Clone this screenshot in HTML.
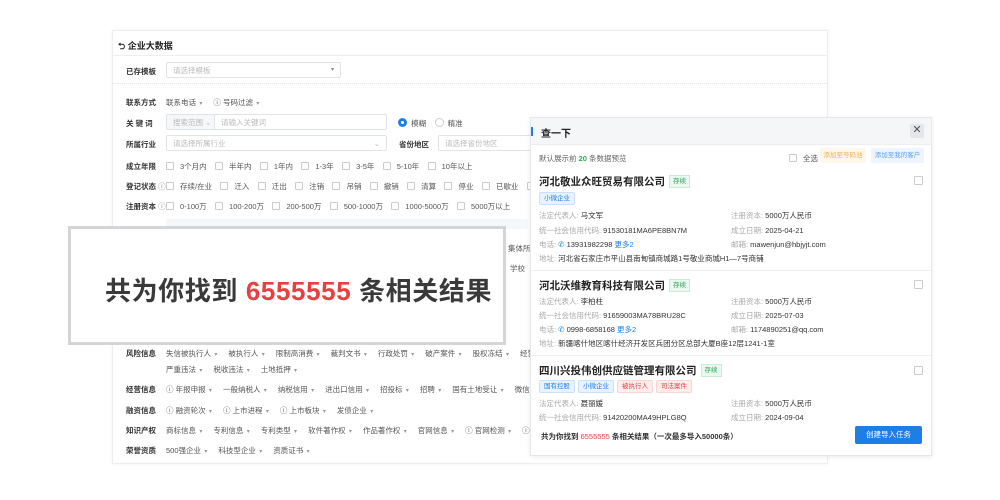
<!DOCTYPE html>
<html><head><meta charset="utf-8">
<style>
*{margin:0;padding:0;box-sizing:border-box}
body{width:1000px;height:500px;background:#fff;font-family:"Liberation Sans","Noto Sans CJK SC",sans-serif;color:#333;position:relative;overflow:hidden;font-size:7.5px}
.a{position:absolute;white-space:nowrap}
.panel{position:absolute;left:112px;top:30px;width:716px;height:434px;background:#fff;border:1px solid #eceef2;box-shadow:0 0 4px rgba(0,0,0,.05)}
.lbl{font-weight:bold;color:#333}
.inp{position:absolute;border:1px solid #e0e3e8;border-radius:2px;background:#fff;color:#bbb;padding-left:6px;line-height:15px;height:16px}
.cb{display:inline-block;width:8px;height:8px;border:1px solid #ccc;border-radius:1px;vertical-align:-1px;margin-right:6px;background:#fff}
.g{color:#555}
.dd{margin-right:11px}
.dd:after{content:"\00a0\00a0▾";color:#999;font-size:6px}
.ov{position:absolute;left:68px;top:226px;width:438px;height:119px;background:#fff;border:3px solid #d4d5d7}
.dlg{position:absolute;left:530px;top:117px;width:402px;height:339px;background:#fff;border:1px solid #e6e8eb;box-shadow:0 1px 5px rgba(0,0,0,.08)}
.tag{display:inline-block;font-size:6.5px;padding:0 4px;line-height:11px;border-radius:2px;margin-right:3px}
.tb{background:#e8f3ff;color:#1e7ee8;border:1px solid #c8e1fc}
.tr{background:#fdeeee;color:#e84040;border:1px solid #f9d4d4}
.tg{background:#eaf8ef;color:#28a55a;border:1px solid #c8ecd5;font-size:6.5px;padding:0 3px;line-height:11px;display:inline-block;vertical-align:2px;margin-left:4px;font-weight:normal}
.k{color:#aaa}
.co{font-size:10.5px;font-weight:bold;color:#222}
.rcb{position:absolute;right:8px;width:9px;height:9px;border:1px solid #ccc;border-radius:1px}
</style></head><body>
<div class="panel"></div>
<div class="a" style="left:118px;top:39px;font-size:9px;font-weight:bold;color:#222">⮌ 企业大数据</div>
<div class="a" style="left:113px;top:55px;width:714px;border-top:1px solid #eee"></div>
<div class="a lbl" style="left:126px;top:66px">已存模板</div>
<div class="inp" style="left:166px;top:62px;width:175px">请选择模板<span style="float:right;margin-right:6px;color:#888;font-size:6px">▾</span></div>
<div class="a" style="left:113px;top:83px;width:714px;border-top:1px dotted #e4e4e4"></div>
<div class="a lbl" style="left:126px;top:97px">联系方式</div>
<div class="a g" style="left:166px;top:97px"><span class="dd">联系电话</span>ⓘ <span class="dd">号码过滤</span></div>
<div class="a lbl" style="left:126px;top:118px">关 键 词</div>
<div class="inp" style="left:166px;top:114px;width:50px;background:#f6f7f9">搜索范围 ⌄</div>
<div class="inp" style="left:214px;top:114px;width:173px">请输入关键词</div>
<div class="a g" style="left:398px;top:118px"><span style="display:inline-block;width:9px;height:9px;border-radius:50%;border:3px solid #1e7ee8;vertical-align:-1px"></span>&nbsp; 模糊 &nbsp;&nbsp;&nbsp;<span style="display:inline-block;width:9px;height:9px;border-radius:50%;border:1px solid #ccc;vertical-align:-1px"></span>&nbsp; 精准</div>
<div class="a lbl" style="left:126px;top:139px">所属行业</div>
<div class="inp" style="left:166px;top:135px;width:221px">请选择所属行业<span style="float:right;margin-right:6px">⌄</span></div>
<div class="a lbl" style="left:399px;top:139px">省份地区</div>
<div class="inp" style="left:438px;top:135px;width:100px">请选择省份地区</div>
<div class="a lbl" style="left:126px;top:161px">成立年限</div>
<div class="a g" style="left:166px;top:161px;word-spacing:0"><span class="cb"></span>3个月内 &nbsp;&nbsp; <span class="cb"></span>半年内 &nbsp;&nbsp; <span class="cb"></span>1年内 &nbsp;&nbsp; <span class="cb"></span>1-3年 &nbsp;&nbsp; <span class="cb"></span>3-5年 &nbsp;&nbsp; <span class="cb"></span>5-10年 &nbsp;&nbsp; <span class="cb"></span>10年以上</div>
<div class="a lbl" style="left:126px;top:181px">登记状态 <span style="font-weight:normal;color:#888">ⓘ</span></div>
<div class="a g" style="left:166px;top:181px"><span class="cb"></span>存续/在业 &nbsp;&nbsp; <span class="cb"></span>迁入 &nbsp;&nbsp; <span class="cb"></span>迁出 &nbsp;&nbsp; <span class="cb"></span>注销 &nbsp;&nbsp; <span class="cb"></span>吊销 &nbsp;&nbsp; <span class="cb"></span>撤销 &nbsp;&nbsp; <span class="cb"></span>清算 &nbsp;&nbsp; <span class="cb"></span>停业 &nbsp;&nbsp; <span class="cb"></span>已歇业 &nbsp;&nbsp; <span class="cb"></span>责令</div>
<div class="a lbl" style="left:126px;top:201px">注册资本 <span style="font-weight:normal;color:#888">ⓘ</span></div>
<div class="a g" style="left:166px;top:201px"><span class="cb"></span>0-100万 &nbsp;&nbsp; <span class="cb"></span>100-200万 &nbsp;&nbsp; <span class="cb"></span>200-500万 &nbsp;&nbsp; <span class="cb"></span>500-1000万 &nbsp;&nbsp; <span class="cb"></span>1000-5000万 &nbsp;&nbsp; <span class="cb"></span>5000万以上</div>
<div class="a" style="left:166px;top:219px;width:362px;height:10px;background:#f6f7f9"></div>
<div class="a g" style="left:508px;top:243px">集体所有</div>
<div class="a g" style="left:510px;top:263px">学校</div>

<div class="a lbl" style="left:126px;top:348px">风险信息</div>
<div class="a g" style="left:166px;top:348px"><span class="dd">失信被执行人</span><span class="dd">被执行人</span><span class="dd">限制高消费</span><span class="dd">裁判文书</span><span class="dd">行政处罚</span><span class="dd">破产案件</span><span class="dd">股权冻结</span><span class="dd">经营异常</span></div>
<div class="a g" style="left:166px;top:364px"><span class="dd">严重违法</span><span class="dd">税收违法</span><span class="dd">土地抵押</span></div>
<div class="a lbl" style="left:126px;top:384px">经营信息</div>
<div class="a g" style="left:166px;top:384px"><span class="dd">ⓘ&nbsp;年报申报</span><span class="dd">一般纳税人</span><span class="dd">纳税信用</span><span class="dd">进出口信用</span><span class="dd">招投标</span><span class="dd">招聘</span><span class="dd">国有土地受让</span>微信公众号</div>
<div class="a lbl" style="left:126px;top:405px">融资信息</div>
<div class="a g" style="left:166px;top:405px"><span class="dd">ⓘ&nbsp;融资轮次</span><span class="dd">ⓘ&nbsp;上市进程</span><span class="dd">ⓘ&nbsp;上市板块</span><span class="dd">发债企业</span></div>
<div class="a lbl" style="left:126px;top:425px">知识产权</div>
<div class="a g" style="left:166px;top:425px"><span class="dd">商标信息</span><span class="dd">专利信息</span><span class="dd">专利类型</span><span class="dd">软件著作权</span><span class="dd">作品著作权</span><span class="dd">官网信息</span><span class="dd">ⓘ&nbsp;官网检测</span>ⓘ&nbsp;备案网</div>
<div class="a lbl" style="left:126px;top:445px">荣誉资质</div>
<div class="a g" style="left:166px;top:445px"><span class="dd">500强企业</span><span class="dd">科技型企业</span><span class="dd">资质证书</span></div>

<div class="ov"><div class="a" style="left:34px;top:42px;font-size:26px;font-weight:bold;color:#3a3a3a;letter-spacing:0.6px">共为你找到 <span style="color:#e64040">6555555</span> 条相关结果</div></div>

<div class="dlg">
<div class="a" style="left:0;top:0;width:400px;height:27px;background:#f5f6f8;border-bottom:1px solid #eee"></div>
<div class="a" style="left:0;top:9px;width:2px;height:9px;background:#1e7ee8"></div>
<div class="a" style="left:10px;top:7px;font-size:10px;font-weight:bold;color:#222">查一下</div>
<div class="a" style="left:379px;top:6px;width:14px;height:14px;background:#e4e6ea;border-radius:2px;text-align:center;line-height:13px;font-size:11px;color:#555">✕</div>
<div class="a" style="left:8px;top:35px;color:#666">默认展示前 <b style="color:#28b04a">20</b> 条数据预览</div>
<div class="a g" style="left:258px;top:35px"><span class="cb"></span>全选</div>
<div class="a" style="left:289px;top:30px;width:46px;height:15px;background:#fdf7ec;color:#f0b050;font-size:6.5px;line-height:15px;text-align:center">添加至号码池</div>
<div class="a" style="left:340px;top:30px;width:53px;height:15px;background:#eef5fe;color:#5a9ef0;font-size:6.5px;line-height:15px;text-align:center">添加至我的客户</div>

<div class="a co" style="left:8px;top:56px">河北敬业众旺贸易有限公司<span class="tg">存续</span></div>
<div class="rcb" style="top:58px"></div>
<div class="a" style="left:8px;top:74px"><span class="tag tb">小微企业</span></div>
<div class="a" style="left:8px;top:92px"><span class="k">法定代表人:</span> 马文军</div>
<div class="a" style="left:200px;top:92px"><span class="k">注册资本:</span> 5000万人民币</div>
<div class="a" style="left:8px;top:107px"><span class="k">统一社会信用代码:</span> 91530181MA6PE8BN7M</div>
<div class="a" style="left:200px;top:107px"><span class="k">成立日期:</span> 2025-04-21</div>
<div class="a" style="left:8px;top:121px"><span class="k">电话:</span> <span style="color:#1e7ee8">✆</span> 13931982298 <span style="color:#1e7ee8">更多2</span></div>
<div class="a" style="left:200px;top:121px"><span class="k">邮箱:</span> mawenjun@hbjyjt.com</div>
<div class="a" style="left:8px;top:135px"><span class="k">地址:</span> 河北省石家庄市平山县南甸镇商城路1号敬业商城H1—7号商铺</div>
<div class="a" style="left:0;top:152px;width:400px;border-top:1px solid #f0f0f0"></div>

<div class="a co" style="left:8px;top:160px">河北沃维教育科技有限公司<span class="tg">存续</span></div>
<div class="rcb" style="top:162px"></div>
<div class="a" style="left:8px;top:178px"><span class="k">法定代表人:</span> 李柏柱</div>
<div class="a" style="left:200px;top:178px"><span class="k">注册资本:</span> 5000万人民币</div>
<div class="a" style="left:8px;top:192px"><span class="k">统一社会信用代码:</span> 91659003MA78BRU28C</div>
<div class="a" style="left:200px;top:192px"><span class="k">成立日期:</span> 2025-07-03</div>
<div class="a" style="left:8px;top:206px"><span class="k">电话:</span> <span style="color:#1e7ee8">✆</span> 0998-6858168 <span style="color:#1e7ee8">更多2</span></div>
<div class="a" style="left:200px;top:206px"><span class="k">邮箱:</span> 1174890251@qq.com</div>
<div class="a" style="left:8px;top:220px"><span class="k">地址:</span> 新疆喀什地区喀什经济开发区兵团分区总部大厦B座12层1241-1室</div>
<div class="a" style="left:0;top:237px;width:400px;border-top:1px solid #f0f0f0"></div>

<div class="a co" style="left:8px;top:245px">四川兴投伟创供应链管理有限公司<span class="tg">存续</span></div>
<div class="rcb" style="top:248px"></div>
<div class="a" style="left:8px;top:262px"><span class="tag tb">国有控股</span><span class="tag tb">小微企业</span><span class="tag tr">被执行人</span><span class="tag tr">司法案件</span></div>
<div class="a" style="left:8px;top:280px"><span class="k">法定代表人:</span> 聂丽媛</div>
<div class="a" style="left:200px;top:280px"><span class="k">注册资本:</span> 5000万人民币</div>
<div class="a" style="left:8px;top:294px"><span class="k">统一社会信用代码:</span> 91420200MA49HPLG8Q</div>
<div class="a" style="left:200px;top:294px"><span class="k">成立日期:</span> 2024-09-04</div>
<div class="a" style="left:10px;top:313px;font-weight:bold;color:#333">共为你找到 <span style="color:#e64040;font-weight:normal">6555555</span> 条相关结果（一次最多导入50000条）</div>
<div class="a" style="left:324px;top:308px;width:67px;height:18px;background:#1e7ee8;color:#fff;border-radius:2px;text-align:center;line-height:18px;font-size:7.5px">创建导入任务</div>
</div>
</body></html>
